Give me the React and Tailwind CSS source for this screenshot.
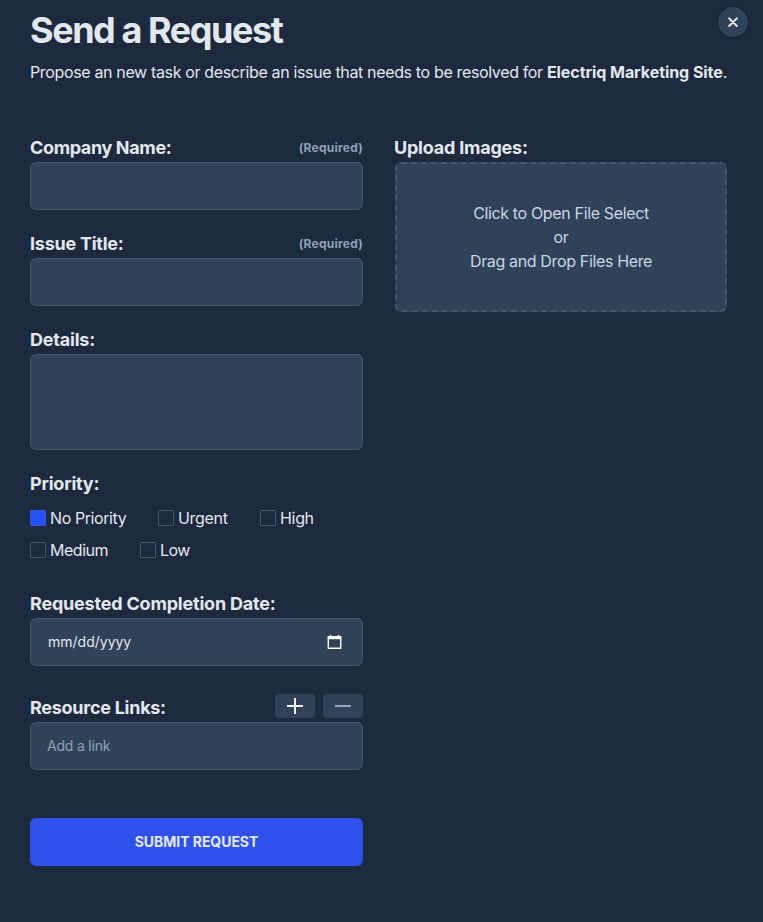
import React from "react";

const field = "w-full rounded-md border border-slate-600 bg-slate-700";

function Label({ children, className = "" }) {
  return (
    <span className={`text-lg leading-7 font-bold whitespace-nowrap text-slate-200 ${className}`}>
      {children}
    </span>
  );
}

function Required() {
  return <span className="text-xs font-bold tracking-[0.02em] text-slate-400">(Required)</span>;
}

function Option({ children, checked, className = "tracking-[-0.02em]" }) {
  return (
    <label className="flex h-6 items-center gap-1">
      <span
        className={`size-4 shrink-0 rounded-[1px] border ${
          checked ? "border-[#2f55dc] bg-[#2350ee]" : "border-slate-600"
        }`}
      />
      <span className={`text-base whitespace-nowrap ${className}`}>{children}</span>
    </label>
  );
}

export default function App() {
  return (
    <div className="relative h-[922px] w-[763px] overflow-hidden bg-slate-800 pt-[10px] pr-9 pl-[30px] font-['Inter','Liberation_Sans',sans-serif] text-slate-200">
      <button
        aria-label="Close"
        className="absolute top-[7px] left-[718px] flex size-[30px] items-center justify-center rounded-full bg-slate-700 ring-1 ring-slate-900/50"
      >
        <svg width="10" height="10" viewBox="0 0 10 10" stroke="#e2e8f0" strokeWidth="2" strokeLinecap="round">
          <path d="M1.2 1.4L8.8 9M8.8 1.4L1.2 9" />
        </svg>
      </button>

      <h1 className="text-4xl leading-10 font-bold tracking-[-0.04em] whitespace-nowrap">Send a Request</h1>
      <p className="mt-[10px] text-base whitespace-nowrap tracking-[-0.022em]">
        Propose an new task or describe an issue that needs to be resolved for{" "}
        <b className="font-bold tracking-[-0.004em]">Electriq Marketing Site</b>.
      </p>

      <div className="mt-[50px] flex gap-8">
        <form className="flex w-[333px] shrink-0 flex-col">
          <div className="flex items-center justify-between">
            <Label className="tracking-[-0.02em]">Company Name:</Label>
            <Required />
          </div>
          <div className={`${field} h-12`} />

          <div className="mt-5 flex items-center justify-between">
            <Label className="tracking-[-0.014em]">Issue Title:</Label>
            <Required />
          </div>
          <div className={`${field} h-12`} />

          <Label className="mt-5 tracking-[-0.012em]">Details:</Label>
          <div className={`${field} h-24`} />

          <Label className="mt-5 tracking-[-0.012em]">Priority:</Label>
          <div className="mt-2 flex flex-wrap gap-y-2">
            <div className="w-32"><Option checked className="tracking-[-0.026em]">No Priority</Option></div>
            <div className="w-[102px]"><Option>Urgent</Option></div>
            <div className="w-[102px]"><Option>High</Option></div>
            <div className="w-[110px]"><Option className="tracking-[-0.03em]">Medium</Option></div>
            <div className="w-[102px]"><Option className="tracking-[-0.035em]">Low</Option></div>
          </div>

          <Label className="mt-7 tracking-[-0.011em]">Requested Completion Date:</Label>
          <div className={`${field} flex h-12 items-center justify-between pr-5 pl-[17px] text-sm`}>
            <span>mm/dd/yyyy</span>
            <svg className="-mt-px" width="15" height="16" viewBox="0 0 15 16" fill="none">
              <path d="M1.3 2.8h12.4v11.4H1.3z" stroke="#fff" strokeWidth="1.4" strokeLinejoin="round" />
              <path d="M.8 2.1h13.4v3.2H.8zM2.8 1h1.5v2H2.8zM10.7 1h1.5v2h-1.5z" fill="#fff" />
            </svg>
          </div>

          <div className="mt-7 flex justify-between">
            <Label className="tracking-[-0.015em]">Resource Links:</Label>
            <div className="flex gap-2">
              <div className="flex h-6 w-10 items-center justify-center rounded-sm bg-slate-700">
                <svg width="16" height="16" viewBox="0 0 16 16" stroke="#f1f5f9" strokeWidth="2">
                  <path d="M8 0v16M0 8h16" />
                </svg>
              </div>
              <div className="flex h-6 w-10 items-center justify-center rounded-sm bg-slate-700">
                <svg width="16" height="16" viewBox="0 0 16 16" stroke="#94a3b8" strokeWidth="2">
                  <path d="M0 8h16" />
                </svg>
              </div>
            </div>
          </div>
          <div className={`${field} flex h-12 items-center px-4 text-sm tracking-[-0.015em] text-slate-400`}>Add a link</div>

          <button className="mt-12 h-12 w-full rounded-md bg-[#2f50e9] text-sm font-bold tracking-[-0.003em] text-slate-200">
            SUBMIT REQUEST
          </button>
        </form>

        <section className="flex w-[332px] shrink-0 flex-col">
          <Label className="-ml-px tracking-[-0.012em]">Upload Images:</Label>
          <div className="flex h-[150px] flex-col items-center justify-center rounded-md border-2 border-dashed border-slate-600 bg-slate-700 text-base tracking-[-0.022em] text-slate-300">
            <span>Click to Open File Select</span>
            <span>or</span>
            <span>Drag and Drop Files Here</span>
          </div>
        </section>
      </div>
    </div>
  );
}
